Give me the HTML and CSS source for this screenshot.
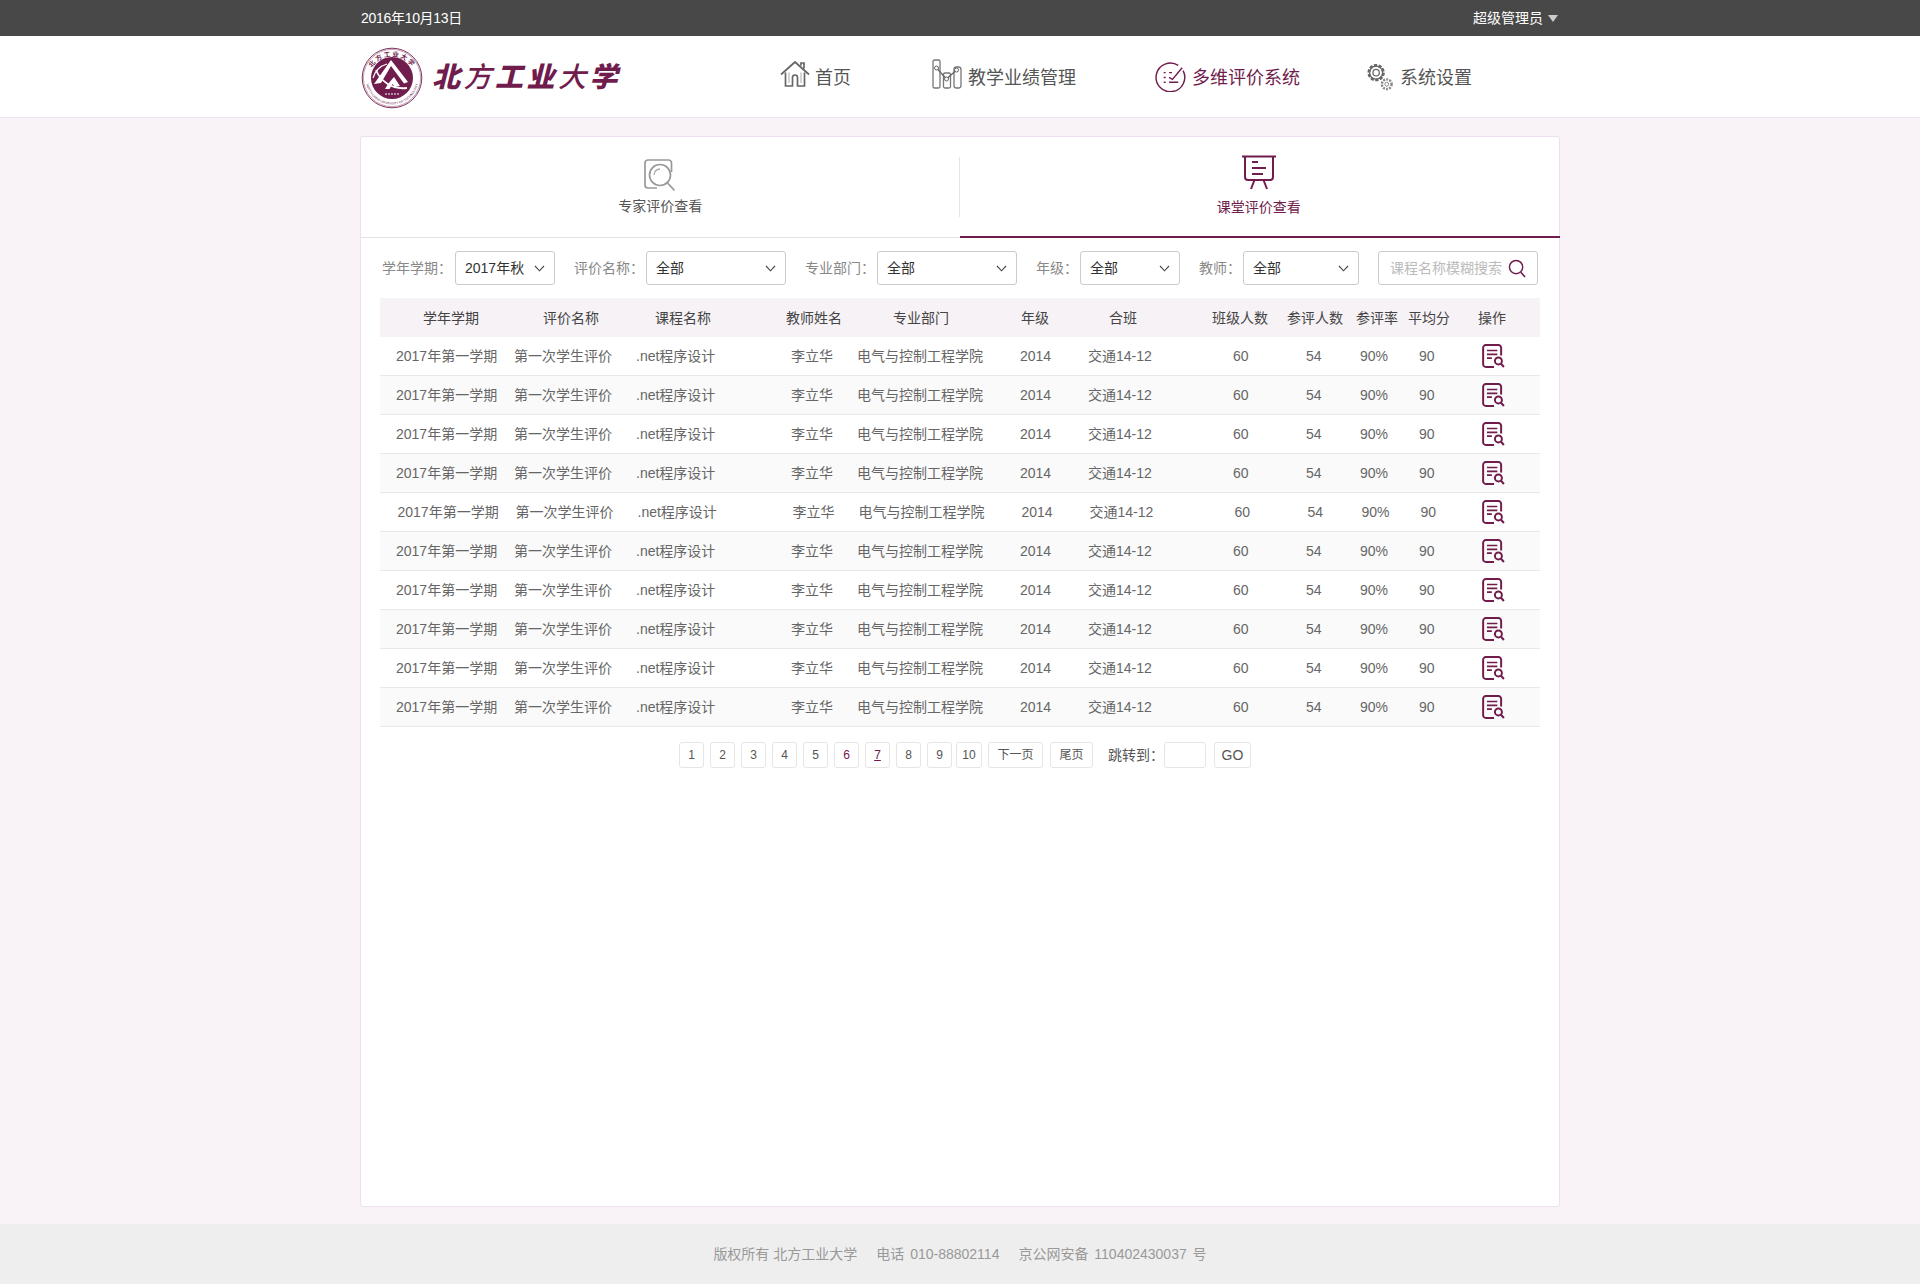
FILE: index.html
```html
<!DOCTYPE html>
<html lang="zh-CN">
<head>
<meta charset="utf-8">
<title>北方工业大学</title>
<link rel="stylesheet" href="styles.css">
</head>
<body>
<svg class="defs" width="0" height="0" aria-hidden="true">
  <symbol id="doc" viewBox="0 0 21 22">
    <path d="M11 21H3.500A2.500 2.500 0 0 1 1 18.500V3.500A2.500 2.500 0 0 1 3.500 1h11.500A2.500 2.500 0 0 1 17.500 3.500V10.500" fill="none" stroke="currentColor" stroke-width="1.800"/>
    <path d="M4.500 6h9.500M4.500 9.500h9.500M4.500 13h4.500" fill="none" stroke="currentColor" stroke-width="1.500"/>
    <circle cx="15" cy="15.500" r="3.200" fill="none" stroke="currentColor" stroke-width="1.800"/>
    <path d="M17.300 18l2.700 3" fill="none" stroke="currentColor" stroke-width="2"/>
  </symbol>
  <symbol id="chev" viewBox="0 0 11 7">
    <path d="M1 1l4.500 4.800L10 1" fill="none" stroke="currentColor" stroke-width="1.100"/>
  </symbol>
</svg>

<div class="topbar">
  <div class="wrap topbar-inner">
    <span class="date">2016年10月13日</span>
    <span class="user">超级管理员<i class="caret"></i></span>
  </div>
</div>

<header class="header">
  <div class="wrap header-inner">
    <div class="logo">
      <svg class="seal" viewBox="0 0 62 62" width="62" height="62">
        <defs>
          <path id="seal-top" d="M7.500 33A23.500 23.500 0 0 1 54.500 33"/>
          <path id="seal-bot" d="M4.500 31A26.500 26.500 0 0 0 57.500 31"/>
        </defs>
        <circle cx="31" cy="31" r="29.800" fill="#fff" stroke="#701c4c" stroke-width=".9"/>
        <circle cx="31" cy="31" r="28.600" fill="none" stroke="#701c4c" stroke-width=".4"/>
        <circle cx="31" cy="31" r="21" fill="#701c4c"/>
        <text class="seal-cn"><textPath href="#seal-top" startOffset="50%" text-anchor="middle">北方工业大学</textPath></text>
        <text class="seal-en"><textPath href="#seal-bot" startOffset="50%" text-anchor="middle">NORTH CHINA UNIVERSITY OF TECHNOLOGY</textPath></text>
        <path d="M13 37L30 13l17 22-4 1.500L30 19 20 36z" fill="#fff"/>
        <path d="M15 23C19 33 30 43 46 41" fill="none" stroke="#fff" stroke-width="1.800"/>
        <path d="M24 42c4-7 9-12 9-12l6 9-5 1-2.500-3-3 5z" fill="#fff"/>
        <path d="M12 31c2-7 7-12 14-14" fill="none" stroke="#fff" stroke-width="1.200"/>
        <path d="M24 47h14" stroke="#fff" stroke-width="1.200" stroke-dasharray="2 1"/>
      </svg>
      <span class="logo-text"><b class="brush">北</b><b class="brush brush-thin">方</b><b class="brush">工</b><b class="brush">业</b><b class="brush brush-thin">大</b><b class="brush">学</b></span>
    </div>
    <nav class="nav">
      <a class="nav-item">
        <svg class="nav-icon icon-home" viewBox="0 0 30 27" width="30" height="27">
          <path d="M1 14.500L15 2l14 12.500M21 5.500V3h3v5.500" fill="none" stroke="#666" stroke-width="1.700"/>
          <path d="M5.500 12.500V26h7V17.500a2.500 2.500 0 0 1 5 0V26h7V12.500" fill="none" stroke="#666" stroke-width="1.700"/>
          <path d="M9 12.500V23M21 12.500V23" fill="none" stroke="#aaa" stroke-width="1"/>
        </svg>首页</a>
      <a class="nav-item">
        <svg class="nav-icon icon-bars" viewBox="0 0 30 30" width="30" height="30">
          <rect x="1" y="1" width="7" height="28" rx="1.500" fill="none" stroke="#777" stroke-width="1.300"/>
          <rect x="11.500" y="14" width="7" height="15" rx="1.500" fill="none" stroke="#777" stroke-width="1.300"/>
          <rect x="22" y="8" width="7" height="21" rx="2.500" fill="none" stroke="#777" stroke-width="1.300"/>
          <path d="M4.500 9l10 11 10-9" fill="none" stroke="#666" stroke-width="1.300"/>
          <circle cx="4.500" cy="9" r="2" fill="#fff" stroke="#666"/><circle cx="14.500" cy="20" r="2" fill="#fff" stroke="#666"/><circle cx="24.500" cy="11" r="2" fill="#fff" stroke="#666"/>
        </svg>教学业绩管理</a>
      <a class="nav-item is-active">
        <svg class="nav-icon icon-eval" viewBox="0 0 32 32" width="31" height="31">
          <path d="M24 4.500A14.800 14.800 0 1 0 29 10" fill="none" stroke="#701c4c" stroke-width="1.500"/>
          <path d="M9 12h2M9 17h2M9 22h2M14.500 12h3M14.500 17l3.500 2L28 7M14.500 22H24" fill="none" stroke="#701c4c" stroke-width="1.500"/>
        </svg>多维评价系统</a>
      <a class="nav-item">
        <svg class="nav-icon icon-gear" viewBox="0 0 30 30" width="29" height="29">
          <circle cx="11.500" cy="11" r="7.500" fill="none" stroke="#666" stroke-width="3" stroke-dasharray="3.200 1.500"/>
          <circle cx="11.500" cy="11" r="6.800" fill="none" stroke="#666" stroke-width="1.300"/>
          <circle cx="11.500" cy="11" r="3.300" fill="none" stroke="#666" stroke-width="1.300"/>
          <circle cx="22.500" cy="23" r="5" fill="#fff" stroke="#888" stroke-width="2.500" stroke-dasharray="2 1.200"/>
          <circle cx="22.500" cy="23" r="2" fill="none" stroke="#888" stroke-width="1"/>
        </svg>系统设置</a>
    </nav>
  </div>
</header>

<main class="main">
  <section class="wrap card">
    <div class="tabs">
      <a class="tab">
        <svg class="tab-icon" viewBox="0 0 34 34" width="34" height="34">
          <path d="M28.500 14V5A3 3 0 0 0 25.500 2H5A3 3 0 0 0 2 5V27A3 3 0 0 0 5 30H14" fill="none" stroke="#999" stroke-width="1.700"/>
          <circle cx="17" cy="17" r="10.500" fill="none" stroke="#999" stroke-width="1.700"/>
          <path d="M11 17a6 6 0 0 1 6-6" fill="none" stroke="#aaa" stroke-width="1.300"/>
          <path d="M24.500 25l7 7.500" fill="none" stroke="#999" stroke-width="1.800"/>
        </svg>
        <span>专家评价查看</span>
      </a>
      <a class="tab is-active">
        <svg class="tab-icon" viewBox="0 0 34 34" width="34" height="36">
          <path d="M0 1.500h34" stroke="#701c4c" stroke-width="2.200"/>
          <path d="M3 2V22a3 3 0 0 0 3 3H28a3 3 0 0 0 3-3V2" fill="none" stroke="#701c4c" stroke-width="2"/>
          <path d="M10 7h6M10 13h14M10 19h11" stroke="#701c4c" stroke-width="1.800"/>
          <path d="M12.500 25L9 34M21.500 25L25 34" stroke="#701c4c" stroke-width="2"/>
        </svg>
        <span>课堂评价查看</span>
      </a>
    </div>

    <div class="filters">
      <label class="field">学年学期：<span class="select sel-100">2017年秋<svg class="chev"><use href="#chev"/></svg></span></label>
      <label class="field">评价名称：<span class="select sel-140">全部<svg class="chev"><use href="#chev"/></svg></span></label>
      <label class="field">专业部门：<span class="select sel-140">全部<svg class="chev"><use href="#chev"/></svg></span></label>
      <label class="field">年级：<span class="select sel-100">全部<svg class="chev"><use href="#chev"/></svg></span></label>
      <label class="field">教师：<span class="select sel-116">全部<svg class="chev"><use href="#chev"/></svg></span></label>
      <div class="search"><span>课程名称模糊搜索</span>
        <svg viewBox="0 0 20 20" width="19" height="19"><circle cx="8.500" cy="8.500" r="7" fill="none" stroke="#701c4c" stroke-width="1.500"/><path d="M13.500 14l4.500 5" stroke="#701c4c" stroke-width="1.700"/></svg>
      </div>
    </div>

    <div class="table">
      <div class="thead">
        <span>学年学期</span><span>评价名称</span><span>课程名称</span><span>教师姓名</span><span>专业部门</span><span>年级</span><span>合班</span><span>班级人数</span><span>参评人数</span><span>参评率</span><span>平均分</span><span>操作</span>
      </div>
      <div class="row"><span>2017年第一学期</span><span>第一次学生评价</span><span>.net程序设计</span><span>李立华</span><span>电气与控制工程学院</span><span>2014</span><span>交通14-12</span><span>60</span><span>54</span><span>90%</span><span>90</span><svg class="doc"><use href="#doc"/></svg></div>
      <div class="row"><span>2017年第一学期</span><span>第一次学生评价</span><span>.net程序设计</span><span>李立华</span><span>电气与控制工程学院</span><span>2014</span><span>交通14-12</span><span>60</span><span>54</span><span>90%</span><span>90</span><svg class="doc"><use href="#doc"/></svg></div>
      <div class="row"><span>2017年第一学期</span><span>第一次学生评价</span><span>.net程序设计</span><span>李立华</span><span>电气与控制工程学院</span><span>2014</span><span>交通14-12</span><span>60</span><span>54</span><span>90%</span><span>90</span><svg class="doc"><use href="#doc"/></svg></div>
      <div class="row"><span>2017年第一学期</span><span>第一次学生评价</span><span>.net程序设计</span><span>李立华</span><span>电气与控制工程学院</span><span>2014</span><span>交通14-12</span><span>60</span><span>54</span><span>90%</span><span>90</span><svg class="doc"><use href="#doc"/></svg></div>
      <div class="row row-shift"><span>2017年第一学期</span><span>第一次学生评价</span><span>.net程序设计</span><span>李立华</span><span>电气与控制工程学院</span><span>2014</span><span>交通14-12</span><span>60</span><span>54</span><span>90%</span><span>90</span><svg class="doc"><use href="#doc"/></svg></div>
      <div class="row"><span>2017年第一学期</span><span>第一次学生评价</span><span>.net程序设计</span><span>李立华</span><span>电气与控制工程学院</span><span>2014</span><span>交通14-12</span><span>60</span><span>54</span><span>90%</span><span>90</span><svg class="doc"><use href="#doc"/></svg></div>
      <div class="row"><span>2017年第一学期</span><span>第一次学生评价</span><span>.net程序设计</span><span>李立华</span><span>电气与控制工程学院</span><span>2014</span><span>交通14-12</span><span>60</span><span>54</span><span>90%</span><span>90</span><svg class="doc"><use href="#doc"/></svg></div>
      <div class="row"><span>2017年第一学期</span><span>第一次学生评价</span><span>.net程序设计</span><span>李立华</span><span>电气与控制工程学院</span><span>2014</span><span>交通14-12</span><span>60</span><span>54</span><span>90%</span><span>90</span><svg class="doc"><use href="#doc"/></svg></div>
      <div class="row"><span>2017年第一学期</span><span>第一次学生评价</span><span>.net程序设计</span><span>李立华</span><span>电气与控制工程学院</span><span>2014</span><span>交通14-12</span><span>60</span><span>54</span><span>90%</span><span>90</span><svg class="doc"><use href="#doc"/></svg></div>
      <div class="row"><span>2017年第一学期</span><span>第一次学生评价</span><span>.net程序设计</span><span>李立华</span><span>电气与控制工程学院</span><span>2014</span><span>交通14-12</span><span>60</span><span>54</span><span>90%</span><span>90</span><svg class="doc"><use href="#doc"/></svg></div>
    </div>

    <div class="pager">
      <a class="page">1</a><a class="page">2</a><a class="page">3</a><a class="page">4</a><a class="page">5</a>
      <a class="page is-hot">6</a><a class="page is-hot is-current">7</a><a class="page">8</a><a class="page">9</a><a class="page page-ten">10</a>
      <a class="page page-next">下一页</a><a class="page page-last">尾页</a>
      <span class="jump">跳转到：</span><span class="jump-input"></span><a class="page page-go">GO</a>
    </div>
  </section>
</main>

<footer class="footer">
  <span>版权所有 北方工业大学</span><span class="wide">电话 010-88802114</span><span class="wide">京公网安备 110402430037 号</span>
</footer>
</body>
</html>
```

FILE: styles.css
```css
* { box-sizing: border-box; }
html, body { margin: 0; padding: 0; }
body {
  min-height: 100vh;
  display: flex;
  flex-direction: column;
  background: #f9f3f8;
  color: #666;
  font: 14px/20px "Liberation Sans", "Noto Sans CJK SC", sans-serif;
}
.defs { position: absolute; }
.wrap { width: 1200px; margin: 0 auto; }

.topbar { height: 36px; background: #484848; color: #fff; }
.topbar-inner { height: 36px; display: flex; align-items: center; justify-content: space-between; padding: 0 2px 0 1px; }
.date { letter-spacing: -.3px; }
.user { display: flex; align-items: center; }
.caret { width: 0; height: 0; margin-left: 5px; border: 5px solid transparent; border-top: 7px solid #ccc; border-bottom: 0; }

.header { height: 82px; background: #fff; border-bottom: 1px solid #f0e2f0; }
.header-inner { height: 81px; display: flex; align-items: center; }
.logo { width: 420px; display: flex; align-items: center; }
.seal { flex: none; margin: 2px 0 0 1px; }
.logo-text {
  margin: 0 0 3px 9px;
  color: #701c4c;
  font-family: "Noto Sans CJK SC", sans-serif;
  font-size: 28px;
  line-height: 40px;
  white-space: nowrap;
  display: flex;
}
.brush { display: block; width: 31.500px; font-style: italic; font-weight: 900; }
.brush-thin { font-weight: 500; }
.seal-cn { font-size: 6.500px; font-weight: 700; fill: #701c4c; letter-spacing: 1.500px; }
.seal-en { font-size: 3.200px; fill: #701c4c; }

.nav { display: grid; grid-template-columns: 152px 223px 210px auto; align-items: center; margin-top: 2px; }
.nav-item { display: flex; align-items: center; font-size: 18px; color: #555; }
.nav-item.is-active { color: #701c4c; }
.nav-icon { flex: none; margin-right: 6px; }
.icon-home { margin: 0 5px 9px 0; }
.icon-bars { margin-bottom: 7px; }
.icon-eval { margin-bottom: 3px; }
.icon-gear { margin-bottom: 2px; }

.main { flex: 1; padding: 18px 0 17px; display: flex; }
.card { background: #fff; border: 1px solid #eee0ee; border-radius: 3px; }

.tabs { display: flex; height: 101px; border-bottom: 1px solid #e3e3e3; }
.tab { flex: 1; display: flex; flex-direction: column; align-items: center; padding-top: 21px; color: #555; position: relative; }
.tab-icon { margin-bottom: 4px; }
.tab:first-child::after { content: ""; position: absolute; right: 0; top: 20px; height: 60px; border-right: 1px solid #e3e3e3; }
.tab.is-active { color: #701c4c; padding: 17px 2px 0 0; margin-right: -1px; border-bottom: 2px solid #701c4c; height: 101px; }
.tab.is-active .tab-icon { margin-bottom: 7px; }

.filters { display: flex; align-items: center; gap: 19px; padding: 13px 0 0 21px; }
.field { display: flex; align-items: center; color: #888; white-space: nowrap; }
.select { height: 34px; margin-left: 2px; padding: 0 9px; display: flex; align-items: center; justify-content: space-between; border: 1px solid #ccc; border-radius: 3px; color: #333; background: #fff; }
.field:first-child .select { margin-left: 3px; }
.sel-100 { width: 100px; }
.sel-140 { width: 140px; }
.sel-116 { width: 116px; }
.chev { width: 11px; height: 7px; color: #444; }
.search { width: 160px; height: 34px; padding: 0 10px 0 11px; display: flex; align-items: center; justify-content: space-between; border: 1px solid #ccc; border-radius: 3px; color: #bbb; white-space: nowrap; }

.table { margin: 13px 19px 0; width: 1160px; }
.thead, .row { display: grid; align-items: center; white-space: nowrap; }
.thead { height: 39px; padding-left: 43px; grid-template-columns: 120px 112px 131px 107px 128px 88px 103px 75px 69px 52px 70px auto; background: #f7f2f6; color: #444; }
.row { height: 39px; padding-left: 16px; grid-template-columns: 118px 122px 155px 66px 163px 68px 145px 73px 54px 59px 63px auto; border-bottom: 1px solid #e8e8e8; }
.row:nth-child(odd) { background: #fafafa; }
.row-shift { padding-left: 17.500px; grid-template-columns: 118px 122px 155px 66px 163px 68px 145px 73px 54px 59px 61.500px auto; }
.doc { width: 23px; height: 24px; color: #701c4c; }

.pager { display: flex; align-items: center; margin-top: 15px; padding-left: 318px; font-size: 12px; color: #555; }
.page { width: 25px; height: 26px; margin-right: 6px; display: flex; align-items: center; justify-content: center; border: 1px solid #e5e5e5; border-radius: 3px; background: #fff; }
.page.is-hot { color: #701c4c; }
.page.is-current { text-decoration: underline; }
.page-ten { width: 26px; margin-left: -2px; }
.page-next { width: 55px; margin-right: 7px; }
.page-last { width: 43px; margin-right: 15px; }
.jump { width: 56px; font-size: 14px; }
.jump-input { width: 42px; height: 26px; margin-right: 8px; border: 1px solid #e5e5e5; border-radius: 3px; }
.page-go { width: 37px; font-size: 14px; margin: 0; }

.footer { height: 60px; display: flex; align-items: center; justify-content: center; gap: 19px; background: #eee; color: #999; }
.wide { word-spacing: 2px; }
```
